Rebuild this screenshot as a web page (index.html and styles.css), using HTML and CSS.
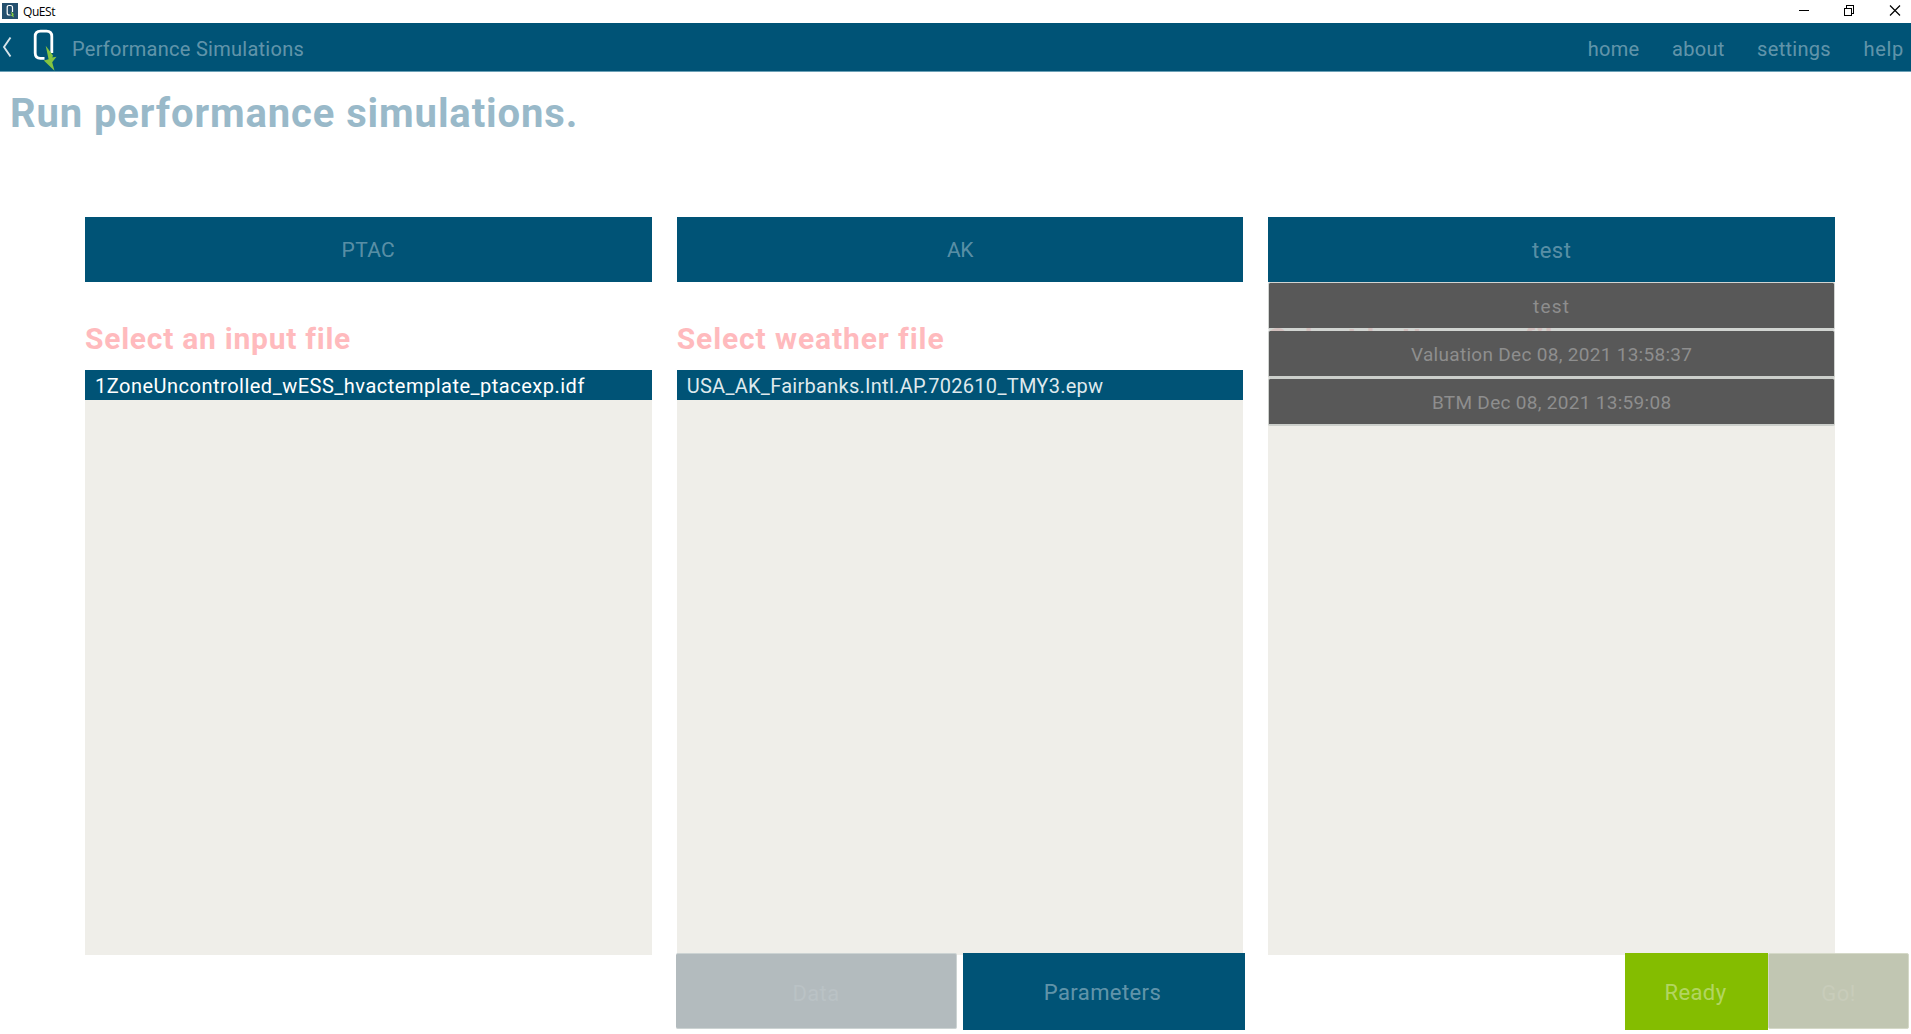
FILE: index.html
```
<!DOCTYPE html>
<html lang="en">
<head>
<meta charset="utf-8">
<title>QuESt</title>
<link rel="stylesheet" href="styles.css">
</head>
<body>
<div class="titlebar">
  <svg class="app-icon" width="16" height="16" viewBox="0 0 16 16"><rect width="16" height="16" fill="#24506e"/><path d="M8.500 12H7Q5.200 12 5.200 10V4.500Q5.200 2.500 7 2.500H8.500Q10.500 2.500 10.500 4.500V9" fill="none" stroke="#fff" stroke-width="1.200"/><path d="M9 8.500L12.300 11.500H11L12 14.500L8.500 12H10Z" fill="#8bd13f"/></svg>
  <span class="app-name">QuESt</span>
  <svg class="window-buttons" width="104" height="12" viewBox="0 0 104 12" fill="none" stroke="#000" shape-rendering="crispEdges"><path d="M0 6.500H10M45.500 4.500H52.500V11.500H45.500ZM47.500 4V1.500H54.500V9.500H53"/><path d="M91 1.500L101 11.500M101 1.500L91 11.500" shape-rendering="auto" stroke-width="1.200"/></svg>
</div>
<header class="navbar">
  <svg class="back" width="12" height="24" viewBox="0 0 12 24"><path d="M9.500 2.500L3 12L9.500 21.500" fill="none" stroke="#d5e3e9" stroke-width="1.900"/></svg>
  <svg class="logo" width="26" height="44" viewBox="0 0 26 44"><path d="M13.500 32.300H9.500Q4.200 32.300 4.200 27V10.500Q4.200 5.200 9.500 5.200H15.500Q20.800 5.200 20.800 10.500V27" fill="none" stroke="#fff" stroke-width="2.800"/><path d="M14.700 19.800L22 29.500L21.300 31.500L25.500 30.700L21.200 36.200L23.500 44.700L12.800 34.500L17.600 33.200Z" fill="#84c441"/></svg>
  <span class="screen-name">Performance Simulations</span>
  <nav class="nav"><a>home</a><a class="about">about</a><a>settings</a><a class="help">help</a></nav>
</header>
<main class="page">
  <h1 class="title">Run performance simulations.</h1>
  <div class="columns">
    <section class="column">
      <div class="picker ptac">PTAC</div>
      <h2 class="heading">Select an input file</h2>
      <div class="list"><div class="item">1ZoneUncontrolled_wESS_hvactemplate_ptacexp.idf</div></div>
    </section>
    <section class="column">
      <div class="picker ak">AK</div>
      <h2 class="heading weather">Select weather file</h2>
      <div class="list"><div class="item epw">USA_AK_Fairbanks.Intl.AP.702610_TMY3.epw</div></div>
    </section>
    <section class="column">
      <div class="picker">test</div>
      <h2 class="heading profile">Select battery profile</h2>
      <div class="list"></div>
      <div class="dropdown">
        <div class="option short">test</div>
        <div class="option">Valuation Dec 08, 2021 13:58:37</div>
        <div class="option">BTM Dec 08, 2021 13:59:08</div>
      </div>
    </section>
  </div>
  <footer class="actions">
    <div class="button data">Data</div>
    <div class="button parameters">Parameters</div>
    <div class="button ready">Ready</div>
    <div class="button go">Go!</div>
  </footer>
</main>
</body>
</html>
```
FILE: styles.css
```
* { box-sizing: border-box; }

body {
  margin: 0;
  height: 1034px;
  overflow: hidden;
  background: #fff;
  font-family: Roboto, "Liberation Sans", sans-serif;
}

h1, h2 { margin: 0; }

.titlebar {
  display: flex;
  align-items: center;
  height: 23px;
  padding: 0 2px;
}

.app-icon { margin-top: -1px; }

.app-name {
  margin-left: 5px;
  color: #000;
  font: 12px/22px "Open Sans", sans-serif;
  letter-spacing: -0.45px;
}

.window-buttons {
  margin: -3px 6px 0 auto;
}

.navbar {
  display: flex;
  align-items: center;
  height: 49px;
  background: #005376;
  border-bottom: 1px solid #6ba0b6;
  color: rgba(255, 255, 255, 0.4);
  font-size: 20px;
}

.back { margin-left: 1px; }

.logo {
  align-self: flex-start;
  margin: 3px 0 0 18px;
  overflow: visible;
}

.screen-name {
  margin-left: 15px;
  padding-top: 4px;
  letter-spacing: 0.27px;
}

.nav {
  display: flex;
  gap: 32.5px;
  margin-left: auto;
  padding: 4px 7px 0 0;
  letter-spacing: 0.3px;
}

.help { letter-spacing: 0.7px; }

.page {
  display: flex;
  flex-direction: column;
}

.title {
  height: 145px;
  padding: 17px 0 0 10px;
  color: #99b9c9;
  font-size: 40px;
  line-height: 49px;
  letter-spacing: 0.89px;
}

.columns {
  display: grid;
  grid-template-columns: repeat(3, 1fr);
  gap: 25px;
  height: 738px;
  padding: 0 76px 0 85px;
}

.column {
  position: relative;
  display: flex;
  flex-direction: column;
}

.picker {
  height: 65px;
  padding-top: 1px;
  background: #005376;
  color: rgba(255, 255, 255, 0.37);
  font-size: 22px;
  line-height: 65px;
  letter-spacing: 0.5px;
  text-align: center;
}

.ptac { font-size: 21px; letter-spacing: 0.3px; }
.ak { font-size: 21px; letter-spacing: -0.5px; }

.heading {
  height: 88px;
  padding-top: 41px;
  color: #ffbabd;
  font-size: 30px;
  line-height: 32px;
  letter-spacing: 0.74px;
  white-space: nowrap;
}

.weather { letter-spacing: 0.9px; }
.profile { letter-spacing: 0.91px; }

.list {
  flex: 1;
  background: #efeee9;
}

.item {
  height: 30px;
  padding: 1px 0 0 10px;
  background: #005376;
  color: #fff;
  font-size: 20px;
  line-height: 30px;
  letter-spacing: 0.5px;
}

.epw {
  color: #dfe9ed;
  letter-spacing: 0.28px;
}

.dropdown {
  position: absolute;
  top: 65px;
  left: 0;
  right: 0;
}

.option {
  height: 48px;
  padding-top: 2px;
  border: 1px solid rgba(190, 194, 190, 0.7);
  border-bottom-width: 2px;
  border-radius: 2px;
  background: #585858 padding-box;
  color: #8e8e8e;
  font-size: 19px;
  line-height: 44px;
  letter-spacing: 0.3px;
  text-align: center;
}

.short { letter-spacing: 1.2px; }

.actions {
  position: relative;
  display: grid;
  grid-template-columns: 281px 288px 380px 143px 141px;
  margin: -2px 2px 0 676px;
}

.button {
  height: 77px;
  padding-top: 2px;
  color: rgba(255, 255, 255, 0.4);
  font-size: 22px;
  line-height: 75px;
  letter-spacing: 0.4px;
  text-align: center;
}

.data {
  height: 76px;
  border: 1px solid #ccd3d3;
  border-left: 0;
  border-radius: 2px;
  background: #b3bbbe;
  color: #bac2c5;
}

.parameters {
  grid-column: 2;
  margin-left: 6px;
  padding-right: 3px;
  background: #005376;
}

.ready {
  grid-column: 4;
  padding-right: 2px;
  background: #84bd00;
}

.go {
  grid-column: 5;
  height: 76px;
  border: 1px solid #d5d9c8;
  border-radius: 2px;
  background: #c1c6b2;
  color: #c8ccba;
}
```
